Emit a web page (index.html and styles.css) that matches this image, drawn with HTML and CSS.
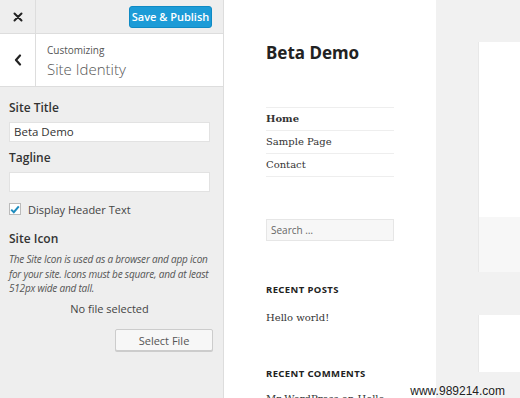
FILE: index.html
```html
<!DOCTYPE html>
<html lang="en">
<head>
    <meta charset="UTF-8">
    <meta name="viewport" content="width=device-width, initial-scale=1.0">
    <title>Customize: Site Identity</title>
    <link rel="stylesheet" href="styles.css">
</head>
<body>
    <div class="customizer">
        <div class="customizer-top">
            <div class="customizer-close">
                <svg width="10" height="10" viewBox="0 0 10 10"><path d="M1.5 1.5l7 7M8.5 1.5l-7 7" stroke="#222" stroke-width="2" stroke-linecap="round"/></svg>
            </div>
            <button class="customizer-save">Save &amp; Publish</button>
        </div>
        <div class="customizer-heading">
            <div class="customizer-back">
                <svg width="8" height="12" viewBox="0 0 8 12"><path d="M6 1.5L2 6l4 4.5" fill="none" stroke="#222" stroke-width="2.2" stroke-linecap="round" stroke-linejoin="round"/></svg>
            </div>
            <div class="customizer-title">
                <span class="customizer-title-small">Customizing</span>
                <span class="customizer-title-big">Site Identity</span>
            </div>
        </div>
        <div class="customizer-controls">
            <label class="control-label">Site Title</label>
            <div class="control-input control-input-first">Beta Demo</div>
            <label class="control-label">Tagline</label>
            <div class="control-input"></div>
            <div class="control-check">
                <span class="checkbox">
                    <svg width="10" height="9" viewBox="0 0 10 9"><path d="M1.2 4.6l2.6 2.6L8.8 1.4" fill="none" stroke="#1e8cbe" stroke-width="2"/></svg>
                </span>
                Display Header Text
            </div>
            <label class="control-label control-label-icon">Site Icon</label>
            <p class="control-description">The Site Icon is used as a browser and app icon for your site. Icons must be square, and at least 512px wide and tall.</p>
            <p class="control-empty">No file selected</p>
            <div class="control-actions">
                <button class="control-button">Select File</button>
            </div>
        </div>
    </div>

    <div class="preview">
        <div class="site-sidebar">
            <h1 class="site-title">Beta Demo</h1>
            <ul class="site-nav">
                <li class="site-nav-current">Home</li>
                <li>Sample Page</li>
                <li>Contact</li>
            </ul>
            <div class="site-search">Search …</div>
            <h2 class="widget-title">Recent Posts</h2>
            <p class="widget-text">Hello world!</p>
            <h2 class="widget-title widget-title-comments">Recent Comments</h2>
            <p class="widget-text widget-text-last">Mr WordPress on Hello world!</p>
        </div>
        <div class="site-main">
            <div class="site-card">
                <div class="site-card-body"></div>
                <div class="site-card-foot"></div>
            </div>
            <div class="site-card site-card-second"></div>
        </div>
        <span class="watermark">www.989214.com</span>
    </div>
</body>
</html>
```

FILE: styles.css
```css
*, *:before, *:after {
    box-sizing: border-box;
}

body {
    margin: 0;
    height: 398px;
    overflow: hidden;
    display: flex;
    font-family: "Open Sans", "Noto Sans", sans-serif;
    color: #444;
}

.customizer {
    width: 224px;
    flex-shrink: 0;
    background: #eee;
    border-right: 1px solid #ddd;
}

.customizer-top {
    display: flex;
    align-items: center;
    height: 34px;
    border-bottom: 1px solid #ddd;
}

.customizer-close {
    width: 36px;
    height: 33px;
    display: flex;
    align-items: center;
    justify-content: center;
    border-right: 1px solid #ddd;
}

.customizer-save {
    margin-left: auto;
    margin-right: 11px;
    width: 83px;
    height: 22px;
    padding: 0;
    border: 1px solid #0f8ac4;
    border-radius: 3px;
    background: #1c9bd7;
    color: #fff;
    font-family: inherit;
    font-size: 11px;
    font-weight: 600;
}

.customizer-heading {
    display: flex;
    height: 53px;
    background: #fff;
    border-bottom: 1px solid #ddd;
}

.customizer-back {
    width: 36px;
    display: flex;
    align-items: center;
    justify-content: center;
    border-right: 1px solid #ddd;
}

.customizer-title {
    display: flex;
    flex-direction: column;
    padding: 9px 0 0 11px;
}

.customizer-title-small {
    font-size: 10px;
    color: #555;
    line-height: 15px;
}

.customizer-title-big {
    font-size: 15px;
    font-weight: 300;
    color: #555;
    line-height: 22px;
}

.customizer-controls {
    padding: 12px 13px 0 9px;
}

.control-label {
    display: block;
    font-size: 12px;
    font-weight: 600;
    color: #333;
    line-height: 18px;
    margin-bottom: 5px;
}

.control-input {
    height: 20px;
    background: #fff;
    border: 1px solid #e2e2e2;
    font-size: 11.5px;
    line-height: 18px;
    padding-left: 4px;
    color: #333;
    margin-bottom: 8px;
}

.control-input-first {
    margin-bottom: 7px;
}

.control-check {
    display: flex;
    align-items: center;
    gap: 7px;
    height: 14px;
    margin-top: 10px;
    font-size: 11px;
    color: #444;
}

.checkbox {
    width: 12px;
    height: 12px;
    background: #fff;
    border: 1px solid #bbb;
    display: flex;
    align-items: center;
    justify-content: center;
}

.control-label-icon {
    margin-top: 14px;
    margin-bottom: 4px;
}

.control-description {
    margin: 0 -3px 0 0;
    font-size: 10px;
    letter-spacing: -0.2px;
    font-style: italic;
    line-height: 14.7px;
    color: #555;
}

.control-empty {
    margin: 5px 0 0;
    text-align: center;
    font-size: 11px;
    line-height: 15px;
    color: #444;
}

.control-actions {
    display: flex;
    justify-content: flex-end;
    margin: 13px -3px 0 0;
}

.control-button {
    width: 98px;
    height: 22px;
    padding: 0;
    background: #f7f7f7;
    border: 1px solid #ccc;
    border-radius: 2px;
    box-shadow: 0 1px 0 #ccc;
    font-family: inherit;
    font-size: 11px;
    color: #555;
}

.preview {
    flex: 1;
    display: flex;
    position: relative;
}

.site-sidebar {
    width: 212px;
    flex-shrink: 0;
    background: #fff;
    padding: 42px 42px 0 42px;
}

.site-title {
    margin: 0;
    font-family: "Noto Sans", sans-serif;
    font-size: 17px;
    font-weight: 700;
    color: #222;
    line-height: 22px;
}

.site-nav {
    list-style: none;
    margin: 43px 0 0;
    padding: 0;
    border-top: 1px solid #eee;
}

.site-nav li {
    font-family: "DejaVu Serif", serif;
    font-size: 10px;
    color: #333;
    line-height: 22px;
    border-bottom: 1px solid #eee;
}

.site-nav-current {
    font-weight: 700;
}

.site-search {
    margin-top: 42px;
    height: 22px;
    background: #f7f7f7;
    border: 1px solid #e6e6e6;
    font-size: 10px;
    line-height: 20px;
    padding-left: 4px;
    color: #666;
}

.widget-title {
    margin: 42px 0 0;
    font-family: "Noto Sans", sans-serif;
    font-size: 9.5px;
    font-weight: 700;
    letter-spacing: 0.4px;
    text-transform: uppercase;
    color: #222;
}

.widget-text {
    margin: 16px 0 0;
    font-family: "DejaVu Serif", serif;
    font-size: 10px;
    color: #333;
}

.widget-title-comments {
    margin-top: 44px;
}

.widget-text-last {
    margin-top: 13px;
}

.site-main {
    flex: 1;
    background: #f1f1f1;
    padding: 42px 0 0 43px;
}

.site-card {
    background: #fff;
    box-shadow: -1px 0 0 #e8e8e8;
}

.site-card-body {
    height: 175px;
}

.site-card-foot {
    height: 55px;
    background: #f7f7f7;
}

.site-card-second {
    margin-top: 43px;
    height: 57px;
}

.watermark {
    position: absolute;
    right: 15px;
    bottom: 0;
    font-family: "Liberation Sans", Arial, sans-serif;
    font-size: 12px;
    color: #222;
    text-shadow: 0 0 2px #fff;
}
```
